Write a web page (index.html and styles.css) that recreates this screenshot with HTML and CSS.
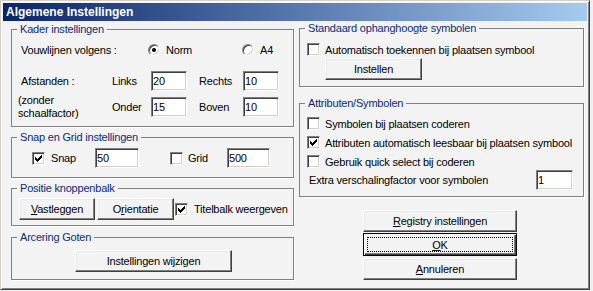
FILE: index.html
```html
<!DOCTYPE html>
<html lang="nl">
<head>
    <meta charset="UTF-8">
    <title>Algemene Instellingen</title>
    <link rel="stylesheet" href="styles.css">
</head>
<body>
<div class="window">
    <div class="titlebar">Algemene Instellingen</div>
    <div class="dlg">
        <div class="col col-left">
            <div class="group g-kader">
                <div class="cap">Kader instellingen</div>
                <div class="row r-vouw">
                    <span class="vouw-lbl">Vouwlijnen volgens :</span>
                    <span class="radio on"></span><span class="opt opt-norm">Norm</span>
                    <span class="radio"></span><span class="opt">A4</span>
                </div>
                <div class="afst">
                    <span class="afst-lbl">Afstanden :</span>
                    <span>Links</span>
                    <input class="edit" value="20">
                    <span>Rechts</span>
                    <input class="edit" value="10">
                    <span class="afst-note">(zonder<br>schaalfactor)</span>
                    <span>Onder</span>
                    <input class="edit" value="15">
                    <span>Boven</span>
                    <input class="edit" value="10">
                </div>
            </div>

            <div class="group g-snap">
                <div class="cap">Snap en Grid instellingen</div>
                <div class="row r-snap">
                    <span class="chk"><svg width="7" height="7" viewBox="0 0 7 7"><path d="M6 0h1v1h-1zM5 1h2v1h-2zM0 2h1v1h-1zM4 2h3v1h-3zM0 3h2v1h-2zM3 3h3v1h-3zM0 4h5v1h-5zM1 5h3v1h-3zM2 6h1v1h-1z"/></svg></span>
                    <span class="snap-lbl">Snap</span>
                    <input class="edit e-snap" value="50">
                    <span class="chk chk-grid"></span>
                    <span class="grid-lbl">Grid</span>
                    <input class="edit e-grid" value="500">
                </div>
            </div>

            <div class="group g-pos">
                <div class="cap">Positie knoppenbalk</div>
                <div class="row r-pos">
                    <button class="btn b-vast"><u>V</u>astleggen</button>
                    <button class="btn b-ori">O<u>r</u>ientatie</button>
                    <span class="chk chk-titel"><svg width="7" height="7" viewBox="0 0 7 7"><path d="M6 0h1v1h-1zM5 1h2v1h-2zM0 2h1v1h-1zM4 2h3v1h-3zM0 3h2v1h-2zM3 3h3v1h-3zM0 4h5v1h-5zM1 5h3v1h-3zM2 6h1v1h-1z"/></svg></span>
                    <span class="chk-txt">Titelbalk weergeven</span>
                </div>
            </div>

            <div class="group g-arc">
                <div class="cap">Arcering Goten</div>
                <button class="btn b-wijzig">Instellingen wijzigen</button>
            </div>
        </div>

        <div class="col col-right">
            <div class="group g-std">
                <div class="cap">Standaard ophanghoogte symbolen</div>
                <div class="row r-chk">
                    <span class="chk"></span>
                    <span class="chk-txt">Automatisch toekennen bij plaatsen symbool</span>
                </div>
                <button class="btn b-inst">Instellen</button>
            </div>

            <div class="group g-attr">
                <div class="cap">Attributen/Symbolen</div>
                <div class="row r-chk first">
                    <span class="chk"></span>
                    <span class="chk-txt">Symbolen bij plaatsen coderen</span>
                </div>
                <div class="row r-chk">
                    <span class="chk"><svg width="7" height="7" viewBox="0 0 7 7"><path d="M6 0h1v1h-1zM5 1h2v1h-2zM0 2h1v1h-1zM4 2h3v1h-3zM0 3h2v1h-2zM3 3h3v1h-3zM0 4h5v1h-5zM1 5h3v1h-3zM2 6h1v1h-1z"/></svg></span>
                    <span class="chk-txt">Attributen automatisch leesbaar bij plaatsen symbool</span>
                </div>
                <div class="row r-chk">
                    <span class="chk"></span>
                    <span class="chk-txt">Gebruik quick select bij coderen</span>
                </div>
                <div class="row r-extra">
                    <span>Extra verschalingfactor voor symbolen</span>
                    <input class="edit e-extra" value="1">
                </div>
            </div>

            <div class="cmds">
                <button class="btn cmd b-reg"><u>R</u>egistry instellingen</button>
                <button class="btn cmd b-ok"><u>O</u>K</button>
                <button class="btn cmd b-ann"><u>A</u>nnuleren</button>
            </div>
        </div>
    </div>
</div>
</body>
</html>
```

FILE: styles.css
```css
*{
    margin:0;
    padding:0;
    box-sizing:border-box;
}
body{
    background:#f0f0f0;
    font-family:"Liberation Sans", Arial, sans-serif;
    font-size:11px;
    letter-spacing:-0.2px;
    color:#000;
}
.window{
    width:590px;
    height:290px;
    padding:2px;
    background:#f3f3f3;
    border:1px solid;
    border-color:#d4d0c8 #404040 #404040 #d4d0c8;
    box-shadow:inset 1px 1px #fff, inset -1px -1px #808080;
    display:flex;
    flex-direction:column;
}
.titlebar{
    height:18px;
    line-height:18px;
    padding-left:3px;
    background:linear-gradient(to right, #0a246a, #a6caf0);
    color:#fff;
    font-weight:bold;
    font-size:12px;
    letter-spacing:0;
}
.dlg{
    display:flex;
    gap:5px;
    padding:0 3px 0 8px;
}
.col{
    display:flex;
    flex-direction:column;
}
.col-left{ width:283px; }
.col-right{ width:285px; }

/* group boxes */
.group{
    border:1px solid #808080;
    box-shadow:1px 1px #fff;
}
.cap{
    display:table;
    margin:-7px 0 0 5px;
    padding:0 3px;
    line-height:13px;
    background:#f3f3f3;
    color:#0a2b7a;
}
.row{
    display:flex;
    align-items:center;
}

/* controls */
.edit{
    height:20px;
    padding:0 1px;
    background:#fff;
    border:1px solid;
    border-color:#808080 #fff #fff #808080;
    box-shadow:inset 1px 1px #404040, inset -1px -1px #d4d0c8;
    font:inherit;
    letter-spacing:inherit;
    color:#000;
    outline:none;
}
.chk{
    width:13px;
    height:13px;
    flex:none;
    display:flex;
    align-items:center;
    justify-content:center;
    background:#fff;
    border:1px solid;
    border-color:#808080 #fff #fff #808080;
    box-shadow:inset 1px 1px #404040, inset -1px -1px #d4d0c8;
}
.chk svg{ display:block; }
.radio{
    width:12px;
    height:12px;
    flex:none;
    border-radius:50%;
    background:#fff;
    border:1px solid;
    border-color:#808080 #fff #fff #808080;
    box-shadow:inset 1px 1px #404040, inset -1px -1px #d4d0c8;
    display:flex;
    align-items:center;
    justify-content:center;
}
.radio.on::after{
    content:"";
    width:4px;
    height:4px;
    border-radius:50%;
    background:#000;
}
.btn{
    display:block;
    height:22px;
    background:#f3f3f3;
    border:1px solid;
    border-color:#fff #404040 #404040 #fff;
    box-shadow:inset -1px -1px #808080, inset 1px 1px #e8e8e8;
    font:inherit;
    letter-spacing:inherit;
    color:#000;
    text-align:center;
}
.btn u{ text-decoration:underline; }

/* Kader instellingen */
.g-kader{
    margin-top:8px;
    height:98px;
}
.r-vouw{
    margin-top:7px;
    height:13px;
    padding-left:9px;
}
.vouw-lbl{ width:127px; }
.opt{ margin-left:6px; }
.opt-norm{ width:76px; }
.afst{
    display:grid;
    grid-template-columns:94px 39px 48px 44px auto;
    grid-template-rows:20px 26px;
    row-gap:3px;
    align-items:center;
    margin-top:15px;
    padding-left:6px;
}
.afst .edit{ width:36px; }
.afst-lbl{ padding-left:3px; }
.afst-note{ line-height:13px; }

/* Snap en Grid */
.g-snap{
    margin-top:10px;
    height:41px;
}
.r-snap{
    margin-top:4px;
    padding-left:20px;
}
.snap-lbl{
    margin-left:6px;
    width:44px;
}
.e-snap{ width:44px; }
.chk-grid{ margin-left:31px; }
.grid-lbl{
    margin-left:5px;
    width:39px;
}
.e-grid{ width:43px; }

/* Positie knoppenbalk */
.g-pos{
    margin-top:10px;
    height:38px;
}
.r-pos{
    margin-top:3px;
    padding-left:7px;
}
.b-vast{ width:76px; }
.b-ori{
    width:77px;
    margin-left:2px;
}
.chk-titel{ margin-left:1px; }
.chk-txt{ margin-left:6px; }

/* Arcering Goten */
.g-arc{
    margin-top:11px;
    height:43px;
}
.b-wijzig{
    width:157px;
    margin:6px 0 0 63px;
}

/* rechterkolom */
.g-std{
    margin-top:7px;
    height:59px;
}
.r-chk{
    height:13px;
    margin-top:6px;
    padding-left:7px;
}
.g-std .r-chk{ margin-top:8px; }
.r-chk .chk-txt{ margin-left:5px; }
.b-inst{
    width:97px;
    margin:2px 0 0 25px;
}
.g-attr{
    margin-top:16px;
    height:94px;
}
.g-attr .first{ margin-top:7px; }
.r-extra{
    margin-top:2px;
    padding:0 10px 0 9px;
    justify-content:space-between;
}
.e-extra{ width:37px; }

.cmds{
    margin:13px 0 0 64px;
}
.cmd{ width:154px; }
.b-reg{ height:22px; }
.b-ok{
    margin-top:1px;
    height:23px;
    border:1px solid #000;
    box-shadow:inset 1px 1px #fff, inset -1px -1px #404040, inset -2px -2px #808080;
    outline:1px dotted #000;
    outline-offset:-5px;
}
.b-ann{ margin-top:2px; }
```
